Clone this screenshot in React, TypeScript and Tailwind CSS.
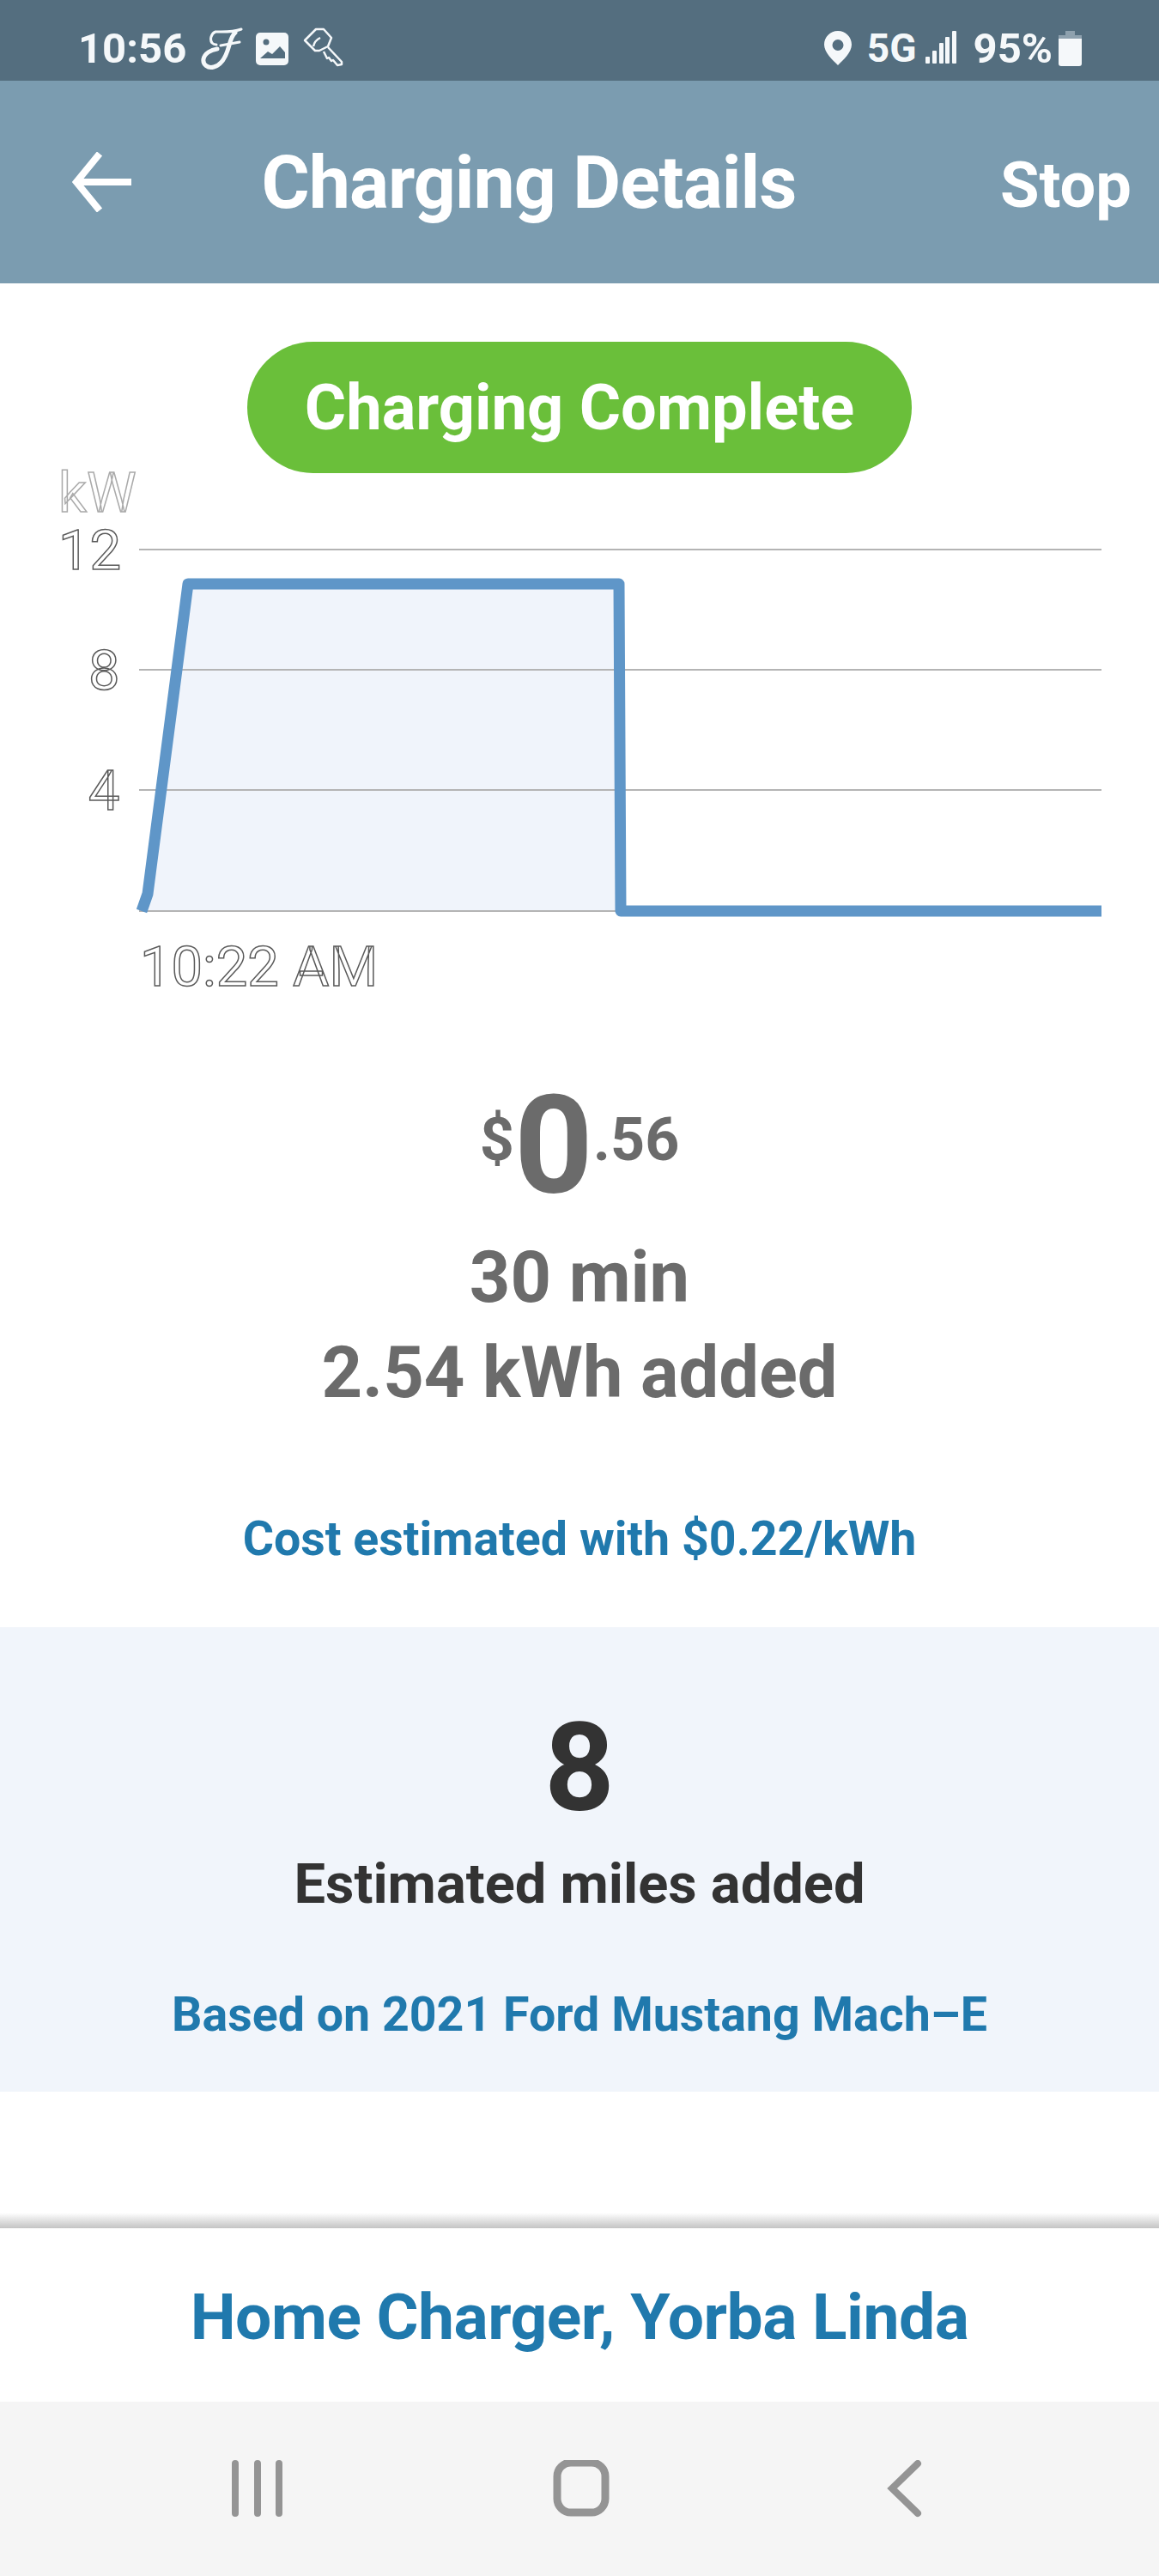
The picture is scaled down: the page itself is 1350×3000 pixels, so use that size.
const roboto = "font-['Roboto',sans-serif]";

const StatusBar = () => (
  <div className="relative flex h-[94px] items-center bg-[#546e7f] pl-[91px] pr-[90px] pt-[18px] text-[#f5f8fa]">
    <span className="w-[143px] text-[49px] font-bold leading-none">10:56</span>
    <svg width="50" height="50" viewBox="0 0 50 50" className="mt-[2px]" fill="none" stroke="#f5f8fa" strokeLinecap="round">
      <path d="M47 2C36 6 24 5 17 5 12 7 10 14 13 18c2 2 4 2 5 2" strokeWidth="3" />
      <path d="M40 6c-5 4-6 12-9 21-3 9-8 17-16 19-7 2-13-3-12-9 1-7 9-11 16-12" strokeWidth="5" />
      <path d="M23 21l22-4" strokeWidth="3" />
    </svg>
    <svg width="38" height="38" viewBox="0 0 38 38" className="ml-[14px] mt-[2px]">
      <rect x="0" y="0" width="38" height="38" rx="5" fill="#f5f8fa" />
      <circle cx="12" cy="11" r="3.500" fill="#546e7f" />
      <path d="M5 30l9-8 5 3 9-9 6 7v7H5z" fill="#546e7f" />
      <path d="M5 33h28" stroke="#f5f8fa" strokeWidth="2" />
    </svg>
    <svg width="48" height="48" viewBox="0 0 48 48" className="ml-[17px]" fill="none" stroke="#f5f8fa" strokeWidth="2.500" strokeLinejoin="round">
      <path d="M2 15L15 2h9l9 10-4 10-10 5h-5z" />
      <path d="M12 22c1-5 4-8 8-10" />
      <path d="M29 23l16 17v3l-5 1-5-6-2 1-3-4-2 1-4-8" />
    </svg>
    <div className="flex-1" />
    <svg width="32" height="40" viewBox="0 0 32 40">
      <path fillRule="evenodd" fill="#f5f8fa" d="M16 0C7 0 0 7 0 16c0 9 10 18 16 24 6-6 16-15 16-24C32 7 25 0 16 0zm0 10a6.500 6.500 0 1 1 0 13 6.500 6.500 0 0 1 0-13z" />
    </svg>
    <span className="ml-[18px] text-[46px] font-bold leading-none">5G</span>
    <svg width="36" height="38" viewBox="0 0 36 38" className="ml-[10px] mt-[-2px]" fill="#f5f8fa">
      <rect x="0" y="30" width="5" height="8" rx="1" />
      <rect x="8" y="23" width="5" height="15" rx="1" />
      <rect x="16" y="14" width="5" height="24" rx="1" />
      <rect x="23" y="7" width="5" height="31" rx="1" />
      <rect x="31" y="0" width="5" height="38" rx="1" />
    </svg>
    <span className="ml-[20px] text-[49px] font-bold leading-none">95%</span>
    <svg width="27" height="41" viewBox="0 0 27 41" className="ml-[7px]">
      <path d="M8 0h11v5h8v7H0V5h8z" fill="#8ea1ae" />
      <path d="M0 9h27v29a3 3 0 0 1-3 3H3a3 3 0 0 1-3-3z" fill="#f5f8fa" />
    </svg>
  </div>
);

const Header = () => (
  <div className="relative flex h-[236px] items-center justify-center bg-[#7b9cb0] pr-[118px] text-white">
    <svg width="70" height="70" viewBox="0 0 70 70" className="absolute left-[84px] top-[83px]" fill="none" stroke="#fff" strokeWidth="8">
      <path d="M69 35H6M32 2L5 35l27 33" />
    </svg>
    <span className="mt-[2px] text-[86px] font-bold leading-none tracking-[-1px]">Charging Details</span>
    <span className="absolute right-[32px] top-[85px] text-[74px] font-bold leading-none">Stop</span>
  </div>
);

const gridLines = [640, 780, 920, 1061];

const Chart = () => (
  <svg width="1350" height="650" viewBox="0 530 1350 650" className="block">
    <path d="M165 1061L172 1040L219 680H721L723 1061Z" fill="#f0f4fb" />
    {gridLines.map((y) => (
      <line key={y} x1="162" x2="1283" y1={y} y2={y} stroke="#b4b4b4" strokeWidth="2" />
    ))}
    <path d="M165 1061L172 1041L219 680H721L723 1061H1283" fill="none" stroke="#5f96c8" strokeWidth="13" strokeLinejoin="round" />
    <g fontFamily="Roboto, sans-serif" fontSize="65" fill="#fff" stroke="#5a5a5a" strokeWidth="1.500">
      <text x="68" y="596" stroke="#aaaaaa">kW</text>
      <text x="68" y="663">12</text>
      <text x="103" y="803">8</text>
      <text x="103" y="943">4</text>
      <text x="163" y="1148">10:22 AM</text>
    </g>
  </svg>
);

const Footer = () => (
  <div>
    <div className="h-[18px] bg-gradient-to-b from-white to-[#c4c4c4]" />
    <div className="flex h-[202px] items-center justify-center pt-[4px] text-[75px] font-bold leading-none tracking-[-0.5px] text-[#2079ad]">
      Home Charger, Yorba Linda
    </div>
    <div className="flex h-[203px] items-start justify-center bg-[#f5f5f5] pt-[68px]">
      <svg width="1350" height="70" viewBox="0 0 1350 70" fill="none" stroke="#949494">
        <g strokeWidth="8" strokeLinecap="round">
          <path d="M274 4v58M300 4v58M325 4v58" />
          <path d="M1069 4L1039 33l30 29" />
        </g>
        <rect x="649" y="3" width="56" height="58" rx="16" strokeWidth="9" />
      </svg>
    </div>
  </div>
);

export default function App() {
  return (
    <div className={`flex h-[3000px] w-[1350px] flex-col bg-white ${roboto}`}>
      <StatusBar />
      <Header />
      <div className="flex flex-col items-center">
        <div className="mt-[68px] flex h-[153px] w-[774px] items-center justify-center rounded-full bg-[#6abf3a] text-[74px] font-bold leading-none text-white">
          Charging Complete
        </div>
        <div className="mt-[-21px]">
          <Chart />
        </div>
      </div>
      <div className="flex flex-col items-center font-bold text-[#6b6b6b]">
        <div className="mt-[88px] flex h-[130px] items-start leading-none">
          <span className="mt-[24px] text-[70px]">$</span>
          <span className="mt-[-14px] text-[160px]">0</span>
          <span className="mt-[24px] text-[70px]">.56</span>
        </div>
        <div className="mt-[34px] text-[83px] leading-[111px]">30 min</div>
        <div className="text-[83px] leading-[111px]">2.54 kWh added</div>
        <div className="mt-[111px] text-[55.500px] leading-none text-[#2079ad]">Cost estimated with $0.22/kWh</div>
      </div>
      <div className="mt-[74px] flex h-[541px] flex-col items-center bg-[#f1f5fb] font-bold">
        <div className="mt-[94px] text-[142px] leading-none text-[#333]">8</div>
        <div className="mt-[31px] text-[65px] leading-none text-[#333]">Estimated miles added</div>
        <div className="mt-[92px] text-[55.500px] leading-none text-[#2079ad]">Based on 2021 Ford Mustang Mach–E</div>
      </div>
      <div className="flex-1" />
      <Footer />
    </div>
  );
}
